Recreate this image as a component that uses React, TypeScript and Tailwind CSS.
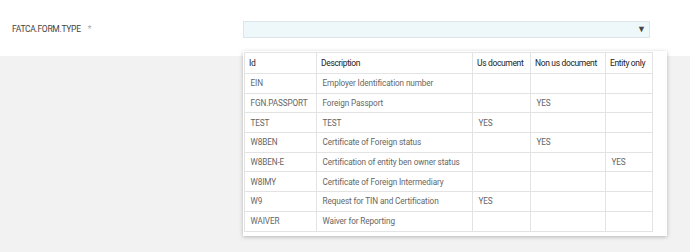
import React from "react";

interface FormTypeRow {
  id: string;
  description: string;
  usDocument?: boolean;
  nonUsDocument?: boolean;
  entityOnly?: boolean;
}

const rows: FormTypeRow[] = [
  { id: "EIN", description: "Employer Identification number" },
  { id: "FGN.PASSPORT", description: "Foreign Passport", nonUsDocument: true },
  { id: "TEST", description: "TEST", usDocument: true },
  { id: "W8BEN", description: "Certificate of Foreign status", nonUsDocument: true },
  { id: "W8BEN-E", description: "Certification of entity ben owner status", entityOnly: true },
  { id: "W8IMY", description: "Certificate of Foreign Intermediary" },
  { id: "W9", description: "Request for TIN and Certification", usDocument: true },
  { id: "WAIVER", description: "Waiver for Reporting" },
];

const th =
  "h-[21px] whitespace-nowrap border border-[#e3e3e3] px-[4px] text-left text-[8.5px] font-normal tracking-[-0.35px] text-[#222]";
const td =
  "h-[19.7px] whitespace-nowrap border border-[#e3e3e3] px-[5.5px] text-[8.2px] tracking-[-0.1px] text-[#666]";

const App: React.FC = () => {
  return (
    <div className="relative h-[252px] w-[690px] overflow-hidden bg-[#f2f2f2] font-['Roboto',sans-serif]">
      <div className="flex h-[56px] items-start bg-white pt-[21px]">
        <div className="flex h-[17px] w-[243px] items-center pl-[12px] text-[8.5px] tracking-[-0.3px] text-[#444]">
          FATCA.FORM.TYPE
          <span className="ml-[7px] text-[#aaa]">*</span>
        </div>
        <div className="flex h-[17px] w-[407px] items-center justify-end border border-[#dce6ea] bg-[#eef7fa] pr-[3px]">
          <span className="text-[9px] leading-none text-[#444]">▼</span>
        </div>
      </div>

      <div className="absolute left-[243px] top-[51px] w-[424px] bg-white pl-[1px] pr-[15px] pt-[1px] pb-[4px] shadow-[0_1px_4px_rgba(0,0,0,0.25)]">
        <table className="w-[408px] table-fixed border-collapse">
          <colgroup>
            <col className="w-[72px]" />
            <col className="w-[156px]" />
            <col className="w-[58px]" />
            <col className="w-[75px]" />
            <col className="w-[47px]" />
          </colgroup>
          <thead>
            <tr>
              <th className={th}>Id</th>
              <th className={th}>Description</th>
              <th className={th}>Us document</th>
              <th className={th}>Non us document</th>
              <th className={th}>Entity only</th>
            </tr>
          </thead>
          <tbody>
            {rows.map((row) => (
              <tr key={row.id}>
                <td className={td}>{row.id}</td>
                <td className={td}>{row.description}</td>
                <td className={td}>{row.usDocument ? "YES" : ""}</td>
                <td className={td}>{row.nonUsDocument ? "YES" : ""}</td>
                <td className={td}>{row.entityOnly ? "YES" : ""}</td>
              </tr>
            ))}
          </tbody>
        </table>
      </div>
    </div>
  );
};

export default App;
